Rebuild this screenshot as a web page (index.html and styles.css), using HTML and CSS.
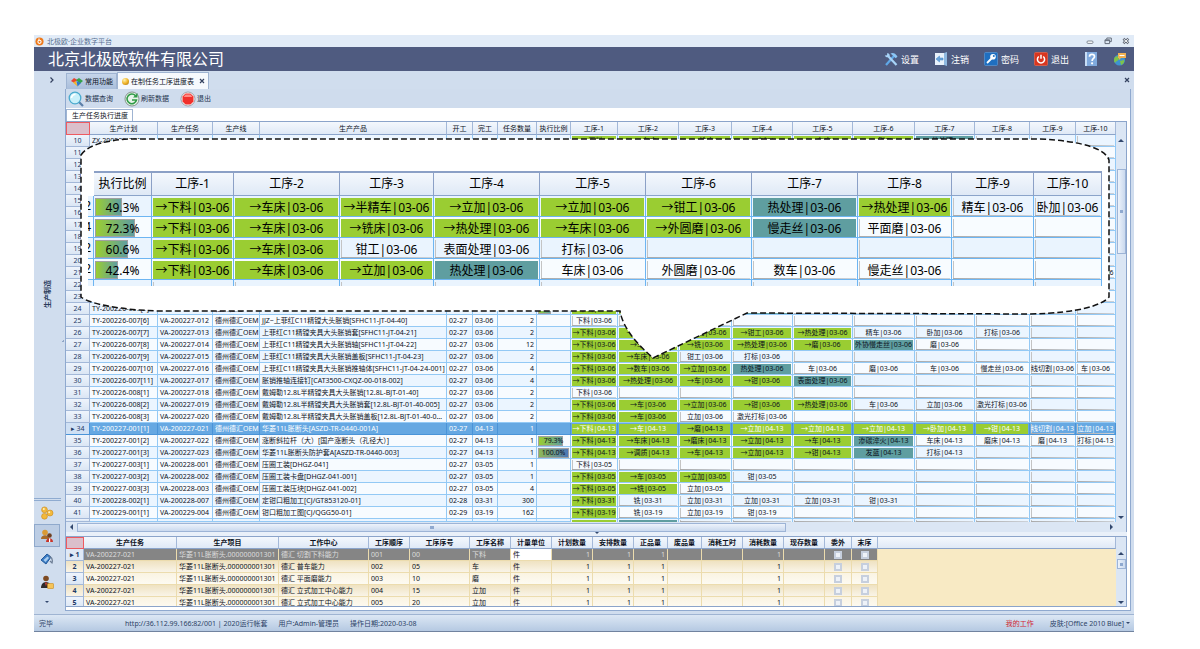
FILE: index.html
```html
<!DOCTYPE html>
<html lang="zh-CN">
<head>
    <meta charset="UTF-8">
    <meta name="viewport" content="width=device-width, initial-scale=1.0">
    <title>北极欧·企业数字平台</title>
    <link rel="stylesheet" href="styles.css">
</head>
<body>

<div class="window">
    <div class="titlebar">
        <svg class="logo" viewBox="0 0 10 10"><circle cx="5" cy="5" r="4.5" fill="#ee7a1c"/><circle cx="5" cy="5.4" r="1.8" fill="none" stroke="#fff" stroke-width="1.2"/><path d="M3.4 2.4h2" stroke="#fff"/></svg>
        <span>北极欧·企业数字平台</span>
        <div class="window-buttons">
            <button aria-label="最小化"><svg viewBox="0 0 8 8"><rect x="1" y="4" width="6" height="2.4" rx="1" fill="#fff" stroke="#666e7c" stroke-width=".8"/></svg></button>
            <button aria-label="还原"><svg viewBox="0 0 8 8"><path d="M2.8 2.4V1h4.5v3.6H6M1 2.8h4.6v3.8H1zM1 3.6h4.6" fill="none" stroke="#666e7c"/></svg></button>
            <button aria-label="关闭"><svg viewBox="0 0 8 8"><path d="M1.4 1.8l5 4.4M6.4 1.8l-5 4.4" stroke="#666e7c" stroke-width="2.6"/><path d="M1.8 2.2l4.2 3.6M6 2.2L1.8 5.8" stroke="#fff" stroke-width=".9"/></svg></button>
        </div>
    </div>

    <header class="header">
        <h1>北京北极欧软件有限公司</h1>
        <div class="header-menu">
            <button><svg viewBox="0 0 14 14"><path d="M2 13l8-9" stroke="#5fa8e8" stroke-width="2.200"/><path d="M6.500 1.500C9 .2 11 1 13.500 4.500l-1.700 1.700L9 3.800z" fill="#8cc6f5"/><path d="M4 4l8.500 9" stroke="#a8d4f8" stroke-width="2.200"/><path d="M.8 3.500l2.200-.2.300-2.300c2 .2 2.900 1.800 2.200 3.600-1.700 1.100-4 .8-4.700-1.100z" fill="#a8d4f8"/></svg>设置</button>
            <button><svg viewBox="0 0 14 14"><path d="M1 1h9v12H1z" fill="#e8f1fb"/><path d="M10 1l3-1v14l-3-1z" fill="#8fb8e0"/><path d="M2 7l3.500-3v2h3.500v2H5.500v2z" fill="#6ba3d8" stroke="#3d84c8" stroke-width=".5"/></svg>注销</button>
            <button><svg viewBox="0 0 14 14"><rect x=".5" y=".5" width="13" height="13" rx="1" fill="#1f6fc0" stroke="#5a97d4" stroke-width=".7"/><circle cx="9" cy="4.800" r="2.800" fill="#fff"/><circle cx="9.800" cy="4" r="1" fill="#1f6fc0"/><path d="M7.500 6.500L3 11" stroke="#fff" stroke-width="1.800"/></svg>密码</button>
            <button><svg viewBox="0 0 14 14"><rect x=".5" y=".5" width="13" height="13" rx="1" fill="#d9361f" stroke="#e8674c" stroke-width=".7"/><path d="M4.800 4.500a3.600 3.600 0 1 0 4.400 0M7 2.800v4" fill="none" stroke="#fff" stroke-width="1.500"/></svg>退出</button>
            <button aria-label="帮助"><svg viewBox="0 0 14 14"><path d="M1 0h12v14H1z" fill="#7fa9dd"/><path d="M1 0h2v14H1z" fill="#c8def6"/><path d="M5.500 4.700c0-3 5-3 5 0 0 1.800-2.400 1.800-2.400 4.200" fill="none" stroke="#fff" stroke-width="1.700"/><circle cx="8.100" cy="11.300" r="1.100" fill="#fff"/></svg></button>
            <button aria-label="在线"><svg viewBox="0 0 14 14"><circle cx="6.500" cy="8" r="5.500" fill="#3f93cf"/><path d="M2 5c3-2 5 0 4 2S3 9 2 11C.5 9 .8 6.500 2 5zM7 9l4-1c1 2-1 4.500-3 5z" fill="#7fc24a"/><path d="M5 1h8v5H8L6 8V6H5z" fill="#f0b052"/><path d="M6.500 3.500h5" stroke="#fff"/></svg></button>
        </div>
    </header>

    <div class="body">
        <nav class="sidebar">
            <button class="expand" aria-label="展开"><svg viewBox="0 0 8 8"><path d="M2.500 1.500L5 4 2.500 6.500" fill="none" stroke="#33415f" stroke-width="1.200"/></svg></button>
            <div class="module"><span>生产制造</span></div>
            <div class="modules">
                <button aria-label="基础"><svg viewBox="0 0 14 14"><g fill="#f3b93c" stroke="#c98a1c" stroke-width=".6"><circle cx="4.500" cy="3.800" r="2.900"/><circle cx="10" cy="7" r="3"/><circle cx="4.500" cy="10.300" r="2.900"/></g><circle cx="3.800" cy="3" r="1" fill="#fff2c0"/><circle cx="9.200" cy="6.200" r="1" fill="#fff2c0"/></svg></button>
                <button class="active" aria-label="生产"><svg viewBox="0 0 14 14"><circle cx="5" cy="3.500" r="2.800" fill="#d99a35"/><path d="M1 10c0-5 8-5 8 0z" fill="#a86a28"/><circle cx="9.500" cy="6.500" r="2.300" fill="#6f4020"/><path d="M6 13c0-5 7-5 7 0z" fill="#c8352a"/><path d="M9 9.500h1.200V13H9z" fill="#fff"/></svg></button>
                <button aria-label="标签"><svg viewBox="0 0 14 14"><path d="M1 8l6-6 4 3-5 7z" fill="#3b7cc4" stroke="#235a9c"/><path d="M3.500 8l4-3.500 1.500 1.500-3.500 4z" fill="#a9cdf0"/><path d="M9.500 4c3 2 3.500 4 2.500 7l-2-2" fill="none" stroke="#6e7f96" stroke-width="1.200"/></svg></button>
                <button aria-label="人员"><svg viewBox="0 0 14 14"><circle cx="6" cy="3.500" r="2.800" fill="#7d4a22"/><path d="M1 13c0-8 10-8 10 0z" fill="#2e2a2c"/><path d="M5 7.500h2l-1 4z" fill="#e0463a"/><rect x="7.500" y="8.500" width="6" height="5" rx=".6" fill="#f6c458" stroke="#c98a1c" stroke-width=".6"/></svg></button>
                <button class="more" aria-label="更多"><i class="arrow down"></i></button>
            </div>
        </nav>
        <div class="splitter"></div>

        <main class="main">
            <div class="tabs">
                <button class="tab"><svg viewBox="0 0 12 10"><path d="M0 4l3-3 3.500 2L3.500 6z" fill="#e8452f"/><path d="M5 3l3-2 4 3-3 2.500z" fill="#35a34a"/><path d="M2 5.500l3-1.500 1.500 5.500z" fill="#f3b32a"/><path d="M6.500 9.500L5.500 4 10 6z" fill="#2c77c8"/></svg>常用功能</button>
                <button class="tab current"><i class="dot"></i>在制任务工序进度表<svg class="close" viewBox="0 0 8 8"><path d="M2 2l4 4M6 2L2 6" stroke="#33415f" stroke-width="1.200"/></svg></button>
                <button class="close-all" aria-label="关闭标签"><svg class="close" viewBox="0 0 8 8"><path d="M2 2l4 4M6 2L2 6" stroke="#33415f" stroke-width="1.200"/></svg></button>
            </div>

            <div class="panel">
                <div class="toolbar">
                    <button><svg viewBox="0 0 16 16"><path d="M10.500 10.500L15 15" stroke="#5c7fa8" stroke-width="2.200"/><circle cx="7" cy="7" r="5.800" fill="#c9f0fa" stroke="#49aace" stroke-width="1.300"/><path d="M3.500 7a3.500 3.500 0 0 1 4-3.500" stroke="#fff" stroke-width="1.600" fill="none"/></svg>数据查询</button>
                    <button><svg viewBox="0 0 16 16"><circle cx="8" cy="8" r="7" fill="#e8f4ea" stroke="#6c7f74" stroke-width=".8"/><path d="M11.500 4.800a4.800 4.800 0 1 0 1 4.200H8" fill="none" stroke="#2f9a46" stroke-width="1.500"/><path d="M13.500 2v4.500H9z" fill="#2f9a46"/></svg>刷新数据</button>
                    <button><svg viewBox="0 0 16 16"><circle cx="8" cy="8" r="7" fill="#fff" stroke="#8b8b93" stroke-width=".8"/><path d="M5.500 2.500h5l3 3v5l-3 3h-5l-3-3v-5z" fill="#f0302c"/><path d="M5.500 3.500h5l2 2.500H3.500z" fill="#ff8a84"/></svg>退出</button>
                </div>
                <div class="subtabs"><button>生产任务执行进度</button></div>

                <div class="grid">
                    <div class="grid-view">
                        <table class="tasks">
                            <colgroup>
                                <col class="w24"><col class="w68"><col class="w55"><col class="w47"><col><col class="w26"><col class="w25"><col class="w39"><col class="w34">
                                <col class="w47"><col class="w61"><col class="w53"><col class="w61"><col class="w60"><col class="w62"><col class="w60"><col class="w55"><col class="w46"><col class="w40">
                            </colgroup>
                            <thead>
                                <tr><th class="corner"></th><th>生产计划</th><th>生产任务</th><th>生产线</th><th>生产产品</th><th>开工</th><th>完工</th><th>任务数量</th><th>执行比例</th><th>工序-1</th><th>工序-2</th><th>工序-3</th><th>工序-4</th><th>工序-5</th><th>工序-6</th><th>工序-7</th><th>工序-8</th><th>工序-9</th><th>工序-10</th></tr>
                            </thead>
                            <tbody id="taskRows"></tbody>
                        </table>
                        <div class="vscroll"><i class="arrow up"></i><div class="thumb"></div><i class="arrow down"></i></div>
                    </div>
                    <div class="hscroll"><i class="arrow left"></i><div class="thumb"></div><i class="arrow right"></i></div>
                </div>

                <div class="grid-split"><i class="arrow down"></i></div>

                <div class="grid details-grid">
                    <div class="grid-view">
                        <table class="details">
                            <colgroup>
                                <col class="w18"><col class="w93"><col class="w102"><col class="w90"><col class="w41"><col class="w60"><col class="w41"><col class="w41"><col class="w41"><col class="w41"><col class="w34"><col class="w34"><col class="w41"><col class="w41"><col class="w41"><col class="w27"><col class="w26"><col>
                            </colgroup>
                            <thead>
                                <tr><th class="corner"></th><th>生产任务</th><th>生产项目</th><th>工作中心</th><th>工序顺序</th><th>工序序号</th><th>工序名称</th><th>计量单位</th><th>计划数量</th><th>安排数量</th><th>正品量</th><th>废品量</th><th>消耗工时</th><th>消耗数量</th><th>现存数量</th><th>委外</th><th>末序</th><th></th></tr>
                            </thead>
                            <tbody id="detailRows"></tbody>
                        </table>
                        <div class="vscroll"><i class="arrow up"></i><div class="thumb"></div><i class="arrow down"></i></div>
                    </div>
                </div>
            </div>
        </main>
    </div>

    <footer class="status">
        <span class="state">完毕</span>
        <span>http://36.112.99.166:82/001 | 2020运行帐套</span>
        <span>用户:Admin-管理员</span>
        <span>操作日期:2020-03-08</span>
        <a class="my-work" href="#">我的工作</a>
        <button>皮肤:[Office 2010 Blue]<i class="arrow down"></i></button>
    </footer>

    <!-- magnified part of the grid -->
    <div class="callout">
        <svg viewBox="0 0 1030 222" preserveAspectRatio="none">
            <path d="M1 17C8 6 30 2 50 1L960 1C1000 3 1025 10 1029 22L1029 159C1022 167 1000 175 950 176L667 175L573 220C556 205 543 190 540 173L80 173C40 172 10 166 1 159Z"/>
        </svg>
        <div class="callout-view">
            <table class="zoomed">
                <colgroup>
                    <col class="w6"><col class="z58"><col class="z82"><col class="z106"><col class="z94"><col class="z106"><col class="z106"><col class="z106"><col class="z106"><col class="z94"><col class="z82"><col>
                </colgroup>
                <thead>
                    <tr><td></td><th>执行比例</th><th>工序-1</th><th>工序-2</th><th>工序-3</th><th>工序-4</th><th>工序-5</th><th>工序-6</th><th>工序-7</th><th>工序-8</th><th>工序-9</th><th>工序-10</th></tr>
                </thead>
                <tbody id="zoomRows"></tbody>
            </table>
        </div>
    </div>
</div>

<script src="script.js"></script>
</body>
</html>
```

FILE: styles.css
```css
* {
    box-sizing: border-box;
}
body {
    margin: 0;
    padding: 35px 66px 18px 34px;
    background: #fff;
    font-family: "Noto Sans", "Noto Sans CJK SC", sans-serif;
    font-size: 7px;
    line-height: 11px;
    color: #0c111c;
}
button {
    margin: 0;
    padding: 0;
    border: none;
    background: none;
    font: inherit;
    color: inherit;
    display: flex;
    align-items: center;
    cursor: pointer;
}
svg {
    display: block;
    flex: none;
}
.window {
    position: relative;
    background: #d0ddee;
}

/* title and header */
.titlebar {
    display: flex;
    align-items: center;
    height: 12px;
    padding: 0 4px 0 1px;
    gap: 3px;
    background: #e1ebf7;
    color: #587090;
}
.logo {
    width: 9px;
    height: 9px;
}
.window-buttons {
    display: flex;
    gap: 10px;
    margin-left: auto;
}
.window-buttons svg,
.expand svg {
    width: 8px;
    height: 8px;
}
.header {
    display: flex;
    align-items: center;
    justify-content: space-between;
    height: 24px;
    padding: 0 7px 0 14px;
    background: #4f5b80;
    color: #fff;
}
.header h1 {
    margin: 0;
    font-size: 16px;
    line-height: 24px;
    font-weight: normal;
}
.header-menu {
    display: flex;
    gap: 15px;
    font-size: 9px;
}
.header-menu button {
    gap: 3px;
}
.header-menu svg {
    width: 14px;
    height: 14px;
}

/* body */
.body {
    display: flex;
}
.sidebar {
    display: flex;
    flex-direction: column;
    width: 27px;
}
.expand {
    justify-content: center;
    height: 18px;
    padding-left: 9px;
}
.module {
    flex: 1;
    display: flex;
    align-items: center;
    justify-content: center;
    font-weight: bold;
    color: #2b3c5c;
}
.module span {
    writing-mode: vertical-rl;
    text-orientation: sideways;
    transform: rotate(180deg);
}
.modules {
    border-top: 3px double #8fabd0;
}
.modules button {
    justify-content: center;
    width: 26px;
    height: 23px;
}
.modules button.more {
    height: 18px;
}
.modules svg {
    width: 14px;
    height: 14px;
}
.modules .active {
    border: 1px solid #8fa9cc;
    background: #bccde4;
}
.splitter {
    width: 4px;
    background: radial-gradient(circle, #8fa5c6 1px, transparent 1px) center / 3px 3px no-repeat;
}
.main {
    flex: 1;
    min-width: 0;
    padding-right: 3px;
}
.tabs {
    display: flex;
    align-items: flex-end;
    height: 18px;
    padding-left: 1px;
}
.tab {
    height: 16px;
    padding: 0 3px 0 4px;
    gap: 2px;
    border: 1px solid #9fb4d2;
    border-bottom: none;
    background: linear-gradient(#c6d5ea, #a9bedb);
}
.tab svg:first-child {
    width: 12px;
    height: 10px;
}
.tab.current {
    height: 17px;
    padding: 0 2px 0 4px;
    background: #f6f9fd;
}
.tab .close,
.close {
    width: 8px;
    height: 8px;
}
.tab .close {
    margin-left: 2px;
}
.close-all {
    height: 18px;
    margin-left: auto;
}
.dot {
    width: 7px;
    height: 7px;
    border-radius: 50%;
    background: radial-gradient(circle at 35% 30%, #fff3b0, #f0b429 50%, #9c6a10);
}
.panel {
    border: 1px solid #8fa9cf;
    border-top: none;
    padding: 0 3px 3px 0;
    background: #fff;
}
.toolbar {
    display: flex;
    align-items: center;
    gap: 11px;
    height: 19px;
    margin-right: -3px;
    padding-left: 2px;
    background: #cfdced;
    color: #24334e;
}
.toolbar button {
    gap: 1px;
}
.toolbar svg {
    width: 16px;
    height: 16px;
}
.subtabs {
    display: flex;
    align-items: flex-end;
    height: 13px;
}
.subtabs button {
    height: 12px;
    padding: 0 4px 0 5px;
    border: 1px solid #9fb4d2;
    border-bottom: none;
}

/* grids */
.grid {
    border: 1px solid #8ba4ca;
    border-left: none;
    border-bottom: none;
}
.grid-view {
    display: flex;
}
table {
    flex: 1;
    width: 100%;
    min-width: 0;
    table-layout: fixed;
    border-collapse: separate;
    border-spacing: 0;
}
th,
td {
    overflow: hidden;
    white-space: nowrap;
    padding: 0;
}
th {
    height: 13px;
    border-right: 1px solid #a3b8d8;
    border-bottom: 1px solid #8ba4ca;
    background: linear-gradient(#f4f8fd, #dfe9f6);
    font-weight: normal;
    text-align: center;
}
.tasks td {
    height: 12px;
    border-right: 1px solid #93c9f5;
    border-bottom: 1px solid #93c9f5;
    padding: 0 2px;
}
.tasks tr:nth-child(odd) td {
    background: #ebf5ff;
}
.tasks tr:nth-child(even) td {
    background: #f7fbff;
}
.tasks tr td.row-no,
.details tr td.row-no {
    background: linear-gradient(#eef4fc, #dbe6f4);
    border-color: #a3b8d8;
    text-align: center;
    color: #1f3a66;
}
.tasks tr.last td {
    height: 3px;
    line-height: 1px;
}
.tasks tr.last td.op {
    border-bottom: none;
}
th.corner {
    border: 1px solid #ee5a60;
    background: #dbbfcb;
}
.tasks td.product {
    padding-right: 0;
    text-overflow: ellipsis;
}
.number {
    text-align: right;
}
.tasks tr.selected td {
    background: #66a8e2;
    border-color: #4a94d8;
    color: #fff;
}
.tasks tr.selected td.row-no {
    background: #cfe0f4;
    color: #1f3a66;
}
.tasks td.op,
.zoomed td.op,
.tasks td.ratio,
.zoomed td.ratio {
    padding: 1px 1px 0;
    text-align: center;
}
.op div {
    height: 10px;
    line-height: 10px;
    background:
        linear-gradient(to right, #aaa, #cdd2d8) bottom / 100% 1px no-repeat,
        linear-gradient(#c4c4c4, #c4c4c4) left / 1px 100% no-repeat;
}
.op .done {
    background: #9acd32;
}
.op .doing {
    background: #5f9ea0;
}
.selected .op .dark {
    color: #0c111c;
}
.last .op div {
    height: 2px;
}
.ratio div {
    position: relative;
    height: 10px;
    line-height: 10px;
}
.ratio i {
    position: absolute;
    left: 0;
    top: 0;
    height: 100%;
    border: 1px solid #a0a0a0;
    background: linear-gradient(to right, #9acd32, #5f9ea0);
}
.ratio i.full {
    background: linear-gradient(to right, #8fb956, #4a76b8);
}
.ratio span {
    position: relative;
}

/* scroll bars */
.vscroll {
    display: flex;
    flex-direction: column;
    align-items: center;
    width: 10px;
    padding: 17px 0 3px;
    background: #dbe6f4;
}
.vscroll .thumb {
    width: 9px;
    height: 85px;
    margin: 27px 0 auto;
    border: 1px solid #9db4d6;
    background: linear-gradient(#8fa9cf, #8fa9cf) center / 3px 3px no-repeat, linear-gradient(to right, #edf3fb, #cad9ee);
}
.hscroll {
    display: flex;
    align-items: center;
    height: 10px;
    padding: 0 13px 0 4px;
    background: #dbe6f4;
}
.hscroll .thumb {
    width: 68%;
    height: 9px;
    margin: 0 auto 0 4px;
    border: 1px solid #9db4d6;
    background: linear-gradient(#8fa9cf, #8fa9cf) center / 4px 3px no-repeat, linear-gradient(#edf3fb, #cad9ee);
}
.arrow {
    width: 0;
    height: 0;
    border: 3px solid transparent;
}
.arrow.up {
    border-top: none;
    border-bottom-color: #33486e;
}
.arrow.down {
    border-bottom: none;
    border-top-color: #33486e;
}
.arrow.left {
    border-left: none;
    border-right-color: #33486e;
}
.arrow.right {
    border-right: none;
    border-left-color: #33486e;
}
.modules .arrow,
.status .arrow,
.grid-split .arrow {
    border-width: 2px;
    border-bottom: none;
}
.grid-split {
    display: flex;
    justify-content: center;
    height: 4px;
    background: #e9f0f9;
}

/* operation details */
.details-grid {
    border-bottom: 1px solid #8ba4ca;
    height: 71px;
    overflow: hidden;
}
.details th {
    height: 12px;
    font-weight: bold;
}
.details td {
    height: 12px;
    padding: 0 2px;
    border-right: 1px solid #ecdcae;
    border-bottom: 1px solid #ecdcae;
    background: linear-gradient(#faf4e2, #fdfaf2);
}
.details tr:nth-child(even) td {
    background: linear-gradient(#efe2c1, #f9f4e8);
}
.details tr td.row-no {
    font-weight: bold;
}
.details tr.selected td {
    background: #858585;
    color: #dcdcdc;
}
.details tr.selected td.editing {
    background: #fff;
    color: #0c111c;
}
.details tr.selected td.row-no {
    background: #dfe9f6;
    color: #1f3a66;
}
.details tr td.rest,
.details tr.selected td.rest {
    background: #f8eac4;
    border-color: #f8eac4;
}
.details td.check {
    text-align: center;
    line-height: 0;
}
.check input {
    appearance: none;
    width: 8px;
    height: 8px;
    margin: 0;
    border: 2px solid #c6cfde;
    background: #eef2f8;
}
.details-grid .vscroll {
    height: 69px;
    padding: 15px 0 2px;
}
.details-grid .thumb {
    height: 10px;
    margin-top: 4px;
}

/* status bar */
.status {
    display: flex;
    align-items: center;
    height: 18px;
    margin-top: 3px;
    padding: 0 4px 0 5px;
    gap: 11px;
    border-top: 1px solid #9fb4d2;
    border-bottom: 1px solid #71839f;
    background: linear-gradient(#dce7f4, #b5c9e2);
    color: #2d4367;
}
.status .state {
    width: 75px;
}
.my-work {
    margin-left: auto;
    margin-right: 5px;
    color: #d01f2e;
    text-decoration: none;
}
.status button {
    gap: 2px;
}

/* callout */
.callout {
    position: absolute;
    top: 103px;
    left: 46px;
    right: 24px;
    height: 222px;
    color: #000;
    font-size: 12px;
    line-height: 20px;
}
.callout svg {
    width: 100%;
    height: 100%;
}
.callout path {
    fill: #fff;
    stroke: #111;
    stroke-width: 1.5;
    stroke-dasharray: 6 3;
}
.callout-view {
    position: absolute;
    top: 33px;
    left: 8px;
    right: 8px;
    height: 115px;
    overflow: hidden;
}
.zoomed th {
    height: 25px;
    border-top: 2px solid #8ba0c6;
    border-right-color: #8ba0c6;
}
.zoomed tbody td {
    height: 21px;
    border-right: 1px solid #6db5f2;
    border-bottom: 1px solid #6db5f2;
    background: #f8fcff;
}
.zoomed tbody tr:nth-child(odd) td {
    background: #eaf4fe;
}
.zoomed .op div,
.zoomed .ratio div {
    height: 18px;
    line-height: 19px;
}
.zoomed td.qty {
    direction: rtl;
    padding-right: 3px;
}

/* column widths */
.w6 { width: 6px; }
.w18 { width: 18px; }
.w24 { width: 24px; }
.w25 { width: 25px; }
.w26 { width: 26px; }
.w27 { width: 27px; }
.w34 { width: 34px; }
.w39 { width: 39px; }
.w40 { width: 40px; }
.w41 { width: 41px; }
.w46 { width: 46px; }
.w47 { width: 47px; }
.w53 { width: 53px; }
.w55 { width: 55px; }
.w60 { width: 60px; }
.w61 { width: 61px; }
.w62 { width: 62px; }
.w68 { width: 68px; }
.w90 { width: 90px; }
.w93 { width: 93px; }
.w102 { width: 102px; }
.z58 { width: 58px; }
.z82 { width: 82px; }
.z94 { width: 94px; }
.z106 { width: 106px; }
```

FILE: script.js
```javascript
// operations: ">" = finished, "*" = in progress, "!" = finished, keeps dark text when selected
const tasks = [
    [10, 'ZX-200225-001', '', '', '', '', '', '', '', '>下料,>车床,>铣床,>立加,>车床,>钳工,*热处理'],
    [11], [12], [13], [14], [15], [16], [17], [18], [19], [20],
    [21, '', '', '', '', '', '03-06', '', '', ',,,,,,,,,打标'],
    [22], [23],
    [24, 'TY-200226-007[5]', 'VA-200227-011', '德州德汇OEM', '', '02-27', '03-06', '2', '42.4', '>下料,>车床,>立加,*热处理'],
    [25, 'TY-200226-007[6]', 'VA-200227-012', '德州德汇OEM', 'JJZ~上菲红C11精镗大头胀销[SFHC11-JT-04-40]', '02-27', '03-06', '2', '', '下料'],
    [26, 'TY-200226-007[7]', 'VA-200227-013', '德州德汇OEM', '上菲红C11精镗夹具大头胀销套[SFHC11-JT-04-21]', '02-27', '03-06', '2', '', '>下料,>车床,>立加,>钳工,>热处理,精车,卧加,打标'],
    [27, 'TY-200226-007[8]', 'VA-200227-014', '德州德汇OEM', '上菲红C11精镗夹具大头胀销轴[SFHC11-JT-04-22]', '02-27', '03-06', '12', '', '>下料,>车,>铣,>热处理,>磨,*外协慢走丝,磨'],
    [28, 'TY-200226-007[9]', 'VA-200227-015', '德州德汇OEM', '上菲红C11精镗夹具大头胀销盖板[SFHC11-JT-04-23]', '02-27', '03-06', '2', '', '>下料,>车床,钳工,打标'],
    [29, 'TY-200226-007[10]', 'VA-200227-016', '德州德汇OEM', '上菲红C11精镗夹具大头胀销推轴体[SFHC11-JT-04-24-001]', '02-27', '03-06', '4', '', '>下料,>数车,>立加,*热处理,车,磨,车,慢走丝,线切割,车'],
    [30, 'TY-200226-007[11]', 'VA-200227-017', '德州德汇OEM', '胀销推轴连接钉[CAT3500-CXQZ-00-018-002]', '02-27', '03-06', '4', '', '>下料,>热处理,>车,>钳,*表面处理'],
    [31, 'TY-200226-008[1]', 'VA-200227-018', '德州德汇OEM', '戴姆勒12.8L半精镗夹具大头胀销[12.8L-BJT-01-40]', '02-27', '03-06', '2', '', '下料'],
    [32, 'TY-200226-008[2]', 'VA-200227-019', '德州德汇OEM', '戴姆勒12.8L半精镗夹具大头胀销套[12.8L-BJT-01-40-005]', '02-27', '03-06', '2', '', '>下料,>车,>立加,>钳,>热处理,车,立加,激光打标'],
    [33, 'TY-200226-008[3]', 'VA-200227-020', '德州德汇OEM', '戴姆勒12.8L半精镗夹具大头胀销盖板[12.8L-BJT-01-40-006]', '02-27', '03-06', '2', '', '>下料,>车,立加,激光打标'],
    [34, 'TY-200227-001[1]', 'VA-200227-021', '德州德汇OEM', '华菱11L胀断头[ASZD-TR-0440-001A]', '02-27', '04-13', '1', '', '>下料,>车,!磨,>立加,>立加,>立加,>卧加,>钳,线切割,立加'],
    [35, 'TY-200227-001[2]', 'VA-200227-022', '德州德汇OEM', '涨断斜拉杆（大）[国产涨断头（孔径大）]', '02-27', '04-13', '1', '79.3', '>下料,>车床,>磨床,>立加,>车,*渗碳淬火,车床,磨床,磨,打标'],
    [36, 'TY-200227-001[3]', 'VA-200227-023', '德州德汇OEM', '华菱11L胀断头防护套A[ASZD-TR-0440-003]', '02-27', '04-13', '1', '100.0', '>下料,>调质,>车,>立加,>钳,*发蓝,打标'],
    [37, 'TY-200227-003[1]', 'VA-200228-001', '德州德汇OEM', '压圈工装[DHGZ-041]', '02-27', '03-05', '1', '', '下料'],
    [38, 'TY-200227-003[2]', 'VA-200228-002', '德州德汇OEM', '压圈工装卡盘[DHGZ-041-001]', '02-27', '03-05', '1', '', '>下料,>车,>立加,钳'],
    [39, 'TY-200227-003[3]', 'VA-200228-003', '德州德汇OEM', '压圈工装压块[DHGZ-041-002]', '02-27', '03-05', '4', '', '>下料,>铣,立加'],
    [40, 'TY-200228-002[1]', 'VA-200228-007', '德州德汇OEM', '定钳口粗加工[CJ/GT853120-01]', '02-28', '03-31', '300', '', '>下料,铣,立加,立加,立加,钳'],
    [41, 'TY-200229-001[1]', 'VA-200229-004', '德州德汇OEM', '钳口粗加工图[CJ/QGG50-01]', '02-29', '03-19', '162', '', '>下料,铣,立加,钳']
];

const zoomed = [
    ['2', '49.3', '>下料,>车床,>半精车,>立加,>立加,>钳工,*热处理,>热处理,精车,卧加'],
    ['4', '72.3', '>下料,>车床,>铣床,>热处理,>车床,>外圆磨,*慢走丝,平面磨'],
    ['2', '60.6', '>下料,>车床,钳工,表面处理,打标'],
    ['2', '42.4', '>下料,>车床,>立加,*热处理,车床,外圆磨,数车,慢走丝'],
    ['', '', '']
];

const details = [
    ['切割下料能力', '001', '00', '下料'],
    ['普车能力', '002', '05', '车'],
    ['平面磨能力', '003', '10', '磨'],
    ['立式加工中心能力', '004', '15', '立加'],
    ['立式加工中心能力', '005', '20', '立加']
];

function opCells(ops, date) {
    const list = (ops || '').split(',');
    let html = '';
    for (let i = 0; i < 10; i++) {
        let name = list[i] || '';
        let cls = '';
        if (name[0] === '>' || name[0] === '!') {
            cls = name[0] === '!' ? 'done dark' : 'done';
            name = '→' + name.slice(1);
        } else if (name[0] === '*') {
            cls = 'doing';
            name = name.slice(1);
        }
        html += `<td class="op"><div class="${cls}">${name ? name + '|' + date : ''}</div></td>`;
    }
    return html;
}

function ratioCell(value) {
    if (!value) return '<td class="ratio"></td>';
    const full = value === '100.0' ? 'full' : '';
    return `<td class="ratio"><div><i class="${full}" style="width: ${value}%"></i><span>${value}%</span></div></td>`;
}

document.getElementById('taskRows').innerHTML = tasks.map(t => {
    const [no, plan = '', task = '', line = '', product = '', start = '', end = '', qty = '', ratio = '', ops] = t;
    const selected = no === 34;
    return `<tr class="${selected ? 'selected' : ''}">
        <td class="row-no">${selected ? '▸ ' : ''}${no}</td><td>${plan}</td><td>${task}</td><td>${line}</td>
        <td class="product">${product}</td><td>${start}</td><td>${end}</td><td class="number">${qty}</td>
        ${ratioCell(ratio)}${opCells(ops, end)}</tr>`;
}).join('') + '<tr class="last"><td class="row-no"></td>' + '<td></td>'.repeat(8) +
    '<td class="op"><div class="done"></div></td><td class="op"><div class="doing"></div></td>' +
    '<td class="op"><div></div></td>'.repeat(8) + '</tr>';

document.getElementById('zoomRows').innerHTML = zoomed.map(z =>
    `<tr><td class="qty">${z[0]}</td>${ratioCell(z[1])}${opCells(z[2], '03-06')}</tr>`
).join('');

document.getElementById('detailRows').innerHTML = details.map((d, i) => {
    const check = name => `<td class="check"><input type="checkbox" aria-label="${name}" disabled></td>`;
    const one = '<td class="number">1</td>';
    return `<tr class="${i === 0 ? 'selected' : ''}">
        <td class="row-no">${i === 0 ? '▸ ' : ''}${i + 1}</td><td>VA-200227-021</td><td>华菱11L胀断头.000000001301</td>
        <td>德汇 ${d[0]}</td><td>${d[1]}</td><td>${d[2]}</td><td>${d[3]}</td><td class="editing">件</td>
        ${one}${one}${one}<td></td><td></td>${one}<td></td>${check('委外')}${check('末序')}<td class="rest"></td></tr>`;
}).join('');
```
